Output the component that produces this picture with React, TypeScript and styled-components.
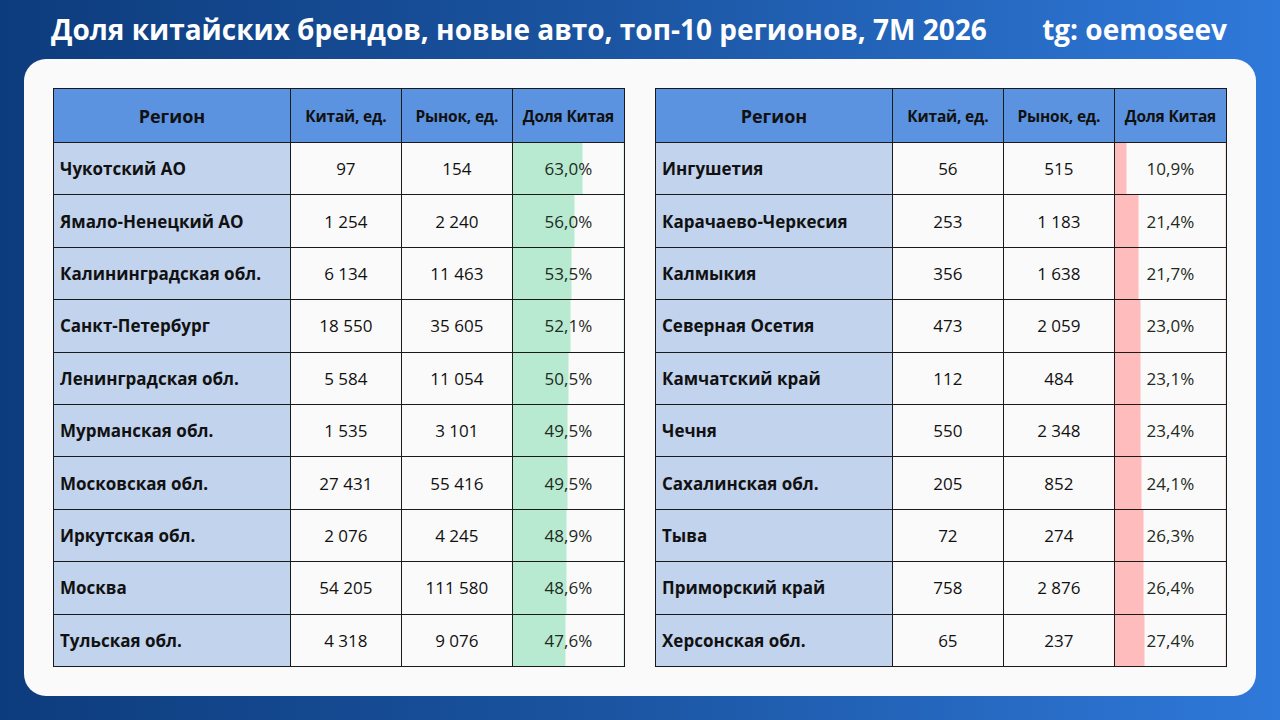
import React from "react";
import styled, { createGlobalStyle } from "styled-components";

const Global = createGlobalStyle`
  html, body { margin: 0; padding: 0; }
  body { font-family: "Open Sans", "Noto Sans", sans-serif; }
`;

const Page = styled.div`
  width: 1280px;
  height: 720px;
  box-sizing: border-box;
  background: linear-gradient(90deg, #0d3c7d 0%, #1a539f 45%, #2f79da 100%);
  display: flex;
  flex-direction: column;
  padding: 0 24px 24px;
`;

const Header = styled.div`
  height: 59px;
  display: flex;
  align-items: center;
  justify-content: space-between;
  padding: 0 29px 2px 27px;
  box-sizing: border-box;
  color: #fff;
  font-weight: 700;
  font-size: 28px;
`;

const Title = styled.div``;
const Tag = styled.div``;

const Card = styled.div`
  flex: 1;
  background: #fafafa;
  border-radius: 22px;
  padding: 29px 29px;
  display: flex;
  gap: 30px;
`;

const Table = styled.table`
  width: 572px;
  border-collapse: collapse;
  table-layout: fixed;
  color: #111;
`;

const Th = styled.th<{ $w: number; $big?: boolean }>`
  width: ${(p) => p.$w}%;
  height: 53px;
  background: #5b93e0;
  border: 1.5px solid #1a1a1a;
  font-size: ${(p) => (p.$big ? "18px" : "15.5px")};
  font-weight: 700;
  text-align: center;
  padding: 0;
  white-space: nowrap;
  letter-spacing: ${(p) => (p.$big ? "0" : "-0.2px")};
`;

const Td = styled.td<{ $region?: boolean }>`
  height: 51px;
  border: 1.5px solid #1a1a1a;
  padding: 0 ${(p) => (p.$region ? "6px" : "0")};
  background: ${(p) => (p.$region ? "#c2d3ee" : "#fafafa")};
  font-size: 17px;
  font-weight: ${(p) => (p.$region ? 700 : 400)};
  text-align: ${(p) => (p.$region ? "left" : "center")};
  white-space: nowrap;
`;

const ShareTd = styled.td`
  height: 51px;
  border: 1.5px solid #1a1a1a;
  padding: 0;
  font-size: 17px;
  text-align: center;
  color: #1e2a22;
`;

type Row = [string, string, string, string];

const left: Row[] = [
  ["Чукотский АО", "97", "154", "63,0"],
  ["Ямало-Ненецкий АО", "1 254", "2 240", "56,0"],
  ["Калининградская обл.", "6 134", "11 463", "53,5"],
  ["Санкт-Петербург", "18 550", "35 605", "52,1"],
  ["Ленинградская обл.", "5 584", "11 054", "50,5"],
  ["Мурманская обл.", "1 535", "3 101", "49,5"],
  ["Московская обл.", "27 431", "55 416", "49,5"],
  ["Иркутская обл.", "2 076", "4 245", "48,9"],
  ["Москва", "54 205", "111 580", "48,6"],
  ["Тульская обл.", "4 318", "9 076", "47,6"],
];

const right: Row[] = [
  ["Ингушетия", "56", "515", "10,9"],
  ["Карачаево-Черкесия", "253", "1 183", "21,4"],
  ["Калмыкия", "356", "1 638", "21,7"],
  ["Северная Осетия", "473", "2 059", "23,0"],
  ["Камчатский край", "112", "484", "23,1"],
  ["Чечня", "550", "2 348", "23,4"],
  ["Сахалинская обл.", "205", "852", "24,1"],
  ["Тыва", "72", "274", "26,3"],
  ["Приморский край", "758", "2 876", "26,4"],
  ["Херсонская обл.", "65", "237", "27,4"],
];

function RegionTable({ rows, color }: { rows: Row[]; color: string }) {
  return (
    <Table>
      <thead>
        <tr>
          <Th $w={41.6} $big>Регион</Th>
          <Th $w={19.4}>Китай, ед.</Th>
          <Th $w={19.4}>Рынок, ед.</Th>
          <Th $w={19.6}>Доля Китая</Th>
        </tr>
      </thead>
      <tbody>
        {rows.map((r) => {
          const pct = parseFloat(r[3].replace(",", "."));
          return (
            <tr key={r[0]}>
              <Td $region>{r[0]}</Td>
              <Td>{r[1]}</Td>
              <Td>{r[2]}</Td>
              <ShareTd
                style={{
                  background: `linear-gradient(90deg, ${color} ${pct}%, #fafafa ${pct}%)`,
                }}
              >
                {r[3]}%
              </ShareTd>
            </tr>
          );
        })}
      </tbody>
    </Table>
  );
}

export default function App() {
  return (
    <Page>
      <Global />
      <Header>
        <Title>Доля китайских брендов, новые авто, топ-10 регионов, 7M 2026</Title>
        <Tag>tg: oemoseev</Tag>
      </Header>
      <Card>
        <RegionTable rows={left} color="#b7ead1" />
        <RegionTable rows={right} color="#ffbcbc" />
      </Card>
    </Page>
  );
}
